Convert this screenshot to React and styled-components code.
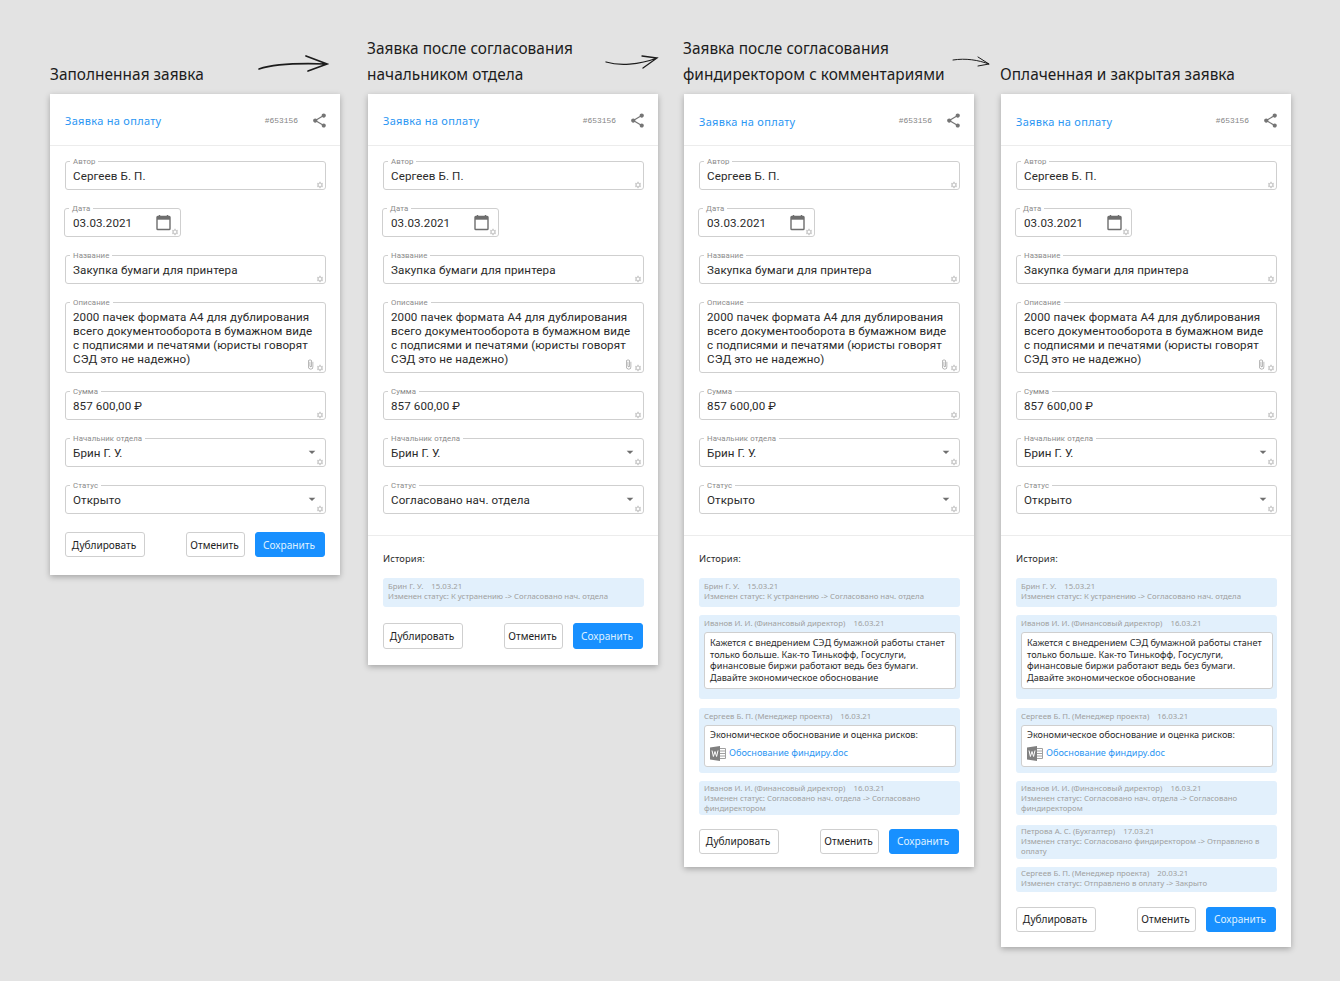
import React from "react";
import styled, { createGlobalStyle } from "styled-components";
import { MdShare, MdSettings, MdArrowDropDown, MdAttachFile } from "react-icons/md";

const Global = createGlobalStyle`
  html, body { margin: 0; padding: 0; background: #e3e3e3; }
  body { font-family: "Noto Sans", sans-serif; color: #1f1f1f; }
`;

const Page = styled.div`
  display: flex;
  align-items: flex-start;
  min-height: 981px;
  padding-left: 50px;
  box-sizing: border-box;
`;
const Column = styled.section`
  flex: 0 0 290px;
  width: 290px;
  margin-left: ${(p) => p.$offset}px;
`;
const HeadingRow = styled.div`
  display: flex;
  align-items: flex-end;
  height: 94px;
  padding-bottom: 6px;
  box-sizing: border-box;
  margin-left: ${(p) => p.$shift}px;
`;
const Heading = styled.h2`
  margin: 0;
  font-family: "Noto Sans", sans-serif;
  font-weight: 400;
  font-size: 15.4px;
  line-height: 26px;
  letter-spacing: 0.03px;
  color: #1c1c1c;
  white-space: nowrap;
`;
const ArrowArt = styled.svg`
  flex: none;
  overflow: visible;
  align-self: flex-start;
  margin-top: ${(p) => p.$top}px;
  margin-left: ${(p) => p.$left}px;
  fill: none;
  stroke: #1c1c1c;
  stroke-linecap: round;
`;
const Card = styled.div`
  width: 290px;
  background: #fff;
  box-shadow: 0 2px 6px rgba(0, 0, 0, 0.28);
`;
const CardHeader = styled.header`
  display: flex;
  align-items: center;
  height: 52px;
  padding: 2px 12px 0 15px;
  box-sizing: border-box;
  border-bottom: 1px solid #ececec;
`;
const CardTitle = styled.a`
  flex: 1;
  font-size: 11px;
  letter-spacing: 0.3px;
  color: #2b96f3;
  margin-top: ${(p) => p.$nudge}px;
`;
const Ticket = styled.span`
  font-family: "Liberation Mono", monospace;
  font-size: 7.9px;
  color: #858585;
  margin-right: 14px;
  margin-top: -1px;
`;
const ShareIcon = styled(MdShare)`
  width: 17px;
  height: 17px;
  color: #757575;
  margin: -1px 0 0 -1px;
`;
const Form = styled.div`
  display: flex;
  flex-direction: column;
  gap: 18px;
  padding: 15px 14px 0 15px;
`;
const Box = styled.div`
  position: relative;
  box-sizing: border-box;
  height: ${(p) => (p.$multi ? 71 : 29)}px;
  width: ${(p) => (p.$narrow ? "117px" : "auto")};
  margin-left: ${(p) => (p.$narrow ? -1 : 0)}px;
  border: 1px solid #cfcfcf;
  border-radius: 3px;
  padding: 7px 8px 0 ${(p) => (p.$narrow ? 8 : 7)}px;
  font-family: Roboto, sans-serif;
  font-size: 11.6px;
  line-height: 14px;
  letter-spacing: 0.1px;
  color: #2a2a2a;
  white-space: pre;
`;
const Legend = styled.label`
  position: absolute;
  left: 4px;
  top: -5px;
  padding: 0 3px;
  background: #fff;
  font-family: Roboto, sans-serif;
  font-size: 7.8px;
  line-height: 9px;
  color: #8b8b8b;
`;
const Gear = styled(MdSettings)`
  position: absolute;
  right: 1px;
  bottom: 0;
  width: 8px;
  height: 8px;
  color: #cdcdcd;
`;
const Caret = styled(MdArrowDropDown)`
  position: absolute;
  right: 5px;
  top: 5px;
  width: 16px;
  height: 16px;
  color: #6f6f6f;
`;
const Clip = styled(MdAttachFile)`
  position: absolute;
  right: 9px;
  bottom: 1px;
  width: 11px;
  height: 13px;
  color: #9a9a9a;
`;
const CalendarArt = styled.svg`
  position: absolute;
  right: 8px;
  top: 5px;
  width: 17px;
  height: 17px;
`;
const History = styled.div`
  margin-top: 21px;
  border-top: 1px solid #ececec;
  padding: 17px 14px 0 15px;
`;
const HistoryTitle = styled.div`
  font-size: 9.4px;
  line-height: 12px;
  letter-spacing: 0.1px;
  color: #2c2c2c;
  margin-bottom: 13px;
`;
const Entry = styled.div`
  background: #e2f0fc;
  border-radius: 3px;
  padding: ${(p) => p.$padTop}px 5px ${(p) => p.$pad}px 5px;
  margin-top: ${(p) => p.$gap}px;
  font-size: 7.8px;
  line-height: 10px;
  color: #a0a0a0;
`;
const Meta = styled.div`
  white-space: pre;
`;
const Comment = styled.div`
  background: #fff;
  border: 1px solid #cfcfcf;
  border-radius: 3px;
  margin: 4px -1px 0 0;
  padding: ${(p) => (p.$withFile ? "3px 3px 5px 5px" : "4px 3px 4px 5px")};
  font-size: 9.13px;
  line-height: 11.7px;
  color: #2a2a2a;
`;
const FileLine = styled.div`
  display: flex;
  align-items: center;
  gap: 3px;
  margin-top: 5px;
  color: #2b96f3;
`;
const WordArt = styled.svg`
  flex: none;
  width: 16px;
  height: 15px;
`;
const Actions = styled.div`
  display: flex;
  align-items: stretch;
  height: ${(p) => p.$h}px;
  margin: ${(p) => p.$top}px 0 0;
  padding: 0 15px ${(p) => p.$bottom}px 15px;
  box-sizing: content-box;
`;
const Button = styled.button`
  box-sizing: border-box;
  width: ${(p) => p.$w}px;
  margin-left: ${(p) => p.$ml}px;
  padding: 0 2px 0 0;
  border: 1px solid ${(p) => (p.$primary ? "#1890ff" : "#cfcfcf")};
  border-radius: 3px;
  background: ${(p) => (p.$primary ? "#1890ff" : "#fff")};
  color: ${(p) => (p.$primary ? "#dff0ff" : "#232323")};
  font-family: "Noto Sans", sans-serif;
  font-size: 10.1px;
`;

const Calendar = () => (
  <CalendarArt viewBox="0 0 17 17">
    <path d="M4.5 1v3M12.5 1v3" stroke="#6e6e6e" strokeWidth="1.4" />
    <rect x="2" y="2.5" width="13" height="13" rx="0.8" fill="none" stroke="#6e6e6e" strokeWidth="1.4" />
    <rect x="2" y="2.5" width="13" height="3.2" fill="#6e6e6e" />
  </CalendarArt>
);

const Word = () => (
  <WordArt viewBox="0 0 16 15">
    <path d="M9 2.5h6.5v10H9" fill="none" stroke="#a0a0a0" strokeWidth="1" />
    <path d="M10 5h5M10 7.5h5M10 10h5" stroke="#a0a0a0" strokeWidth="1" />
    <path d="M0 1.5 10 0v15L0 13.5z" fill="#808080" />
    <path d="M2 4.5l1.4 6 1.6-5 1.6 5 1.4-6" fill="none" stroke="#fff" strokeWidth="1" />
  </WordArt>
);

const Field = ({ label, value, multi, narrow, select, date, clip }) => (
  <Box $multi={multi} $narrow={narrow}>
    <Legend>{label}</Legend>
    {value}
    {select && <Caret />}
    {date && <Calendar />}
    {clip && <Clip />}
    <Gear />
  </Box>
);

const e1 = { meta: "Брин Г. У.    15.03.21", text: "Изменен статус: К устранению -> Согласовано нач. отдела", gap: 0, padTop: 3, pad: 6 };
const c1 = {
  meta: "Иванов И. И. (Финансовый директор)    16.03.21",
  comment: "Кажется с внедрением СЭД бумажной работы станет только больше. Как-то Тинькофф, Госуслуги, финансовые биржи работают ведь без бумаги. Давайте экономическое обоснование",
  gap: 8,
  padTop: 3,
  pad: 10,
};
const c2 = {
  meta: "Сергеев Б. П. (Менеджер проекта)    16.03.21",
  comment: "Экономическое обоснование и оценка рисков:",
  file: "Обоснование финдиру.doc",
  gap: 9,
  padTop: 3,
  pad: 6,
};
const e2 = {
  meta: "Иванов И. И. (Финансовый директор)    16.03.21",
  text: "Изменен статус: Согласовано нач. отдела -> Согласовано финдиректором",
  gap: 8,
  padTop: 2,
  pad: 2,
};
const e3 = {
  meta: "Петрова А. С. (Бухгалтер)    17.03.21",
  text: "Изменен статус: Согласовано финдиректором -> Отправлено в оплату",
  gap: 10,
  padTop: 1,
  pad: 3,
};
const e4 = {
  meta: "Сергеев Б. П. (Менеджер проекта)    20.03.21",
  text: "Изменен статус: Отправлено в оплату -> Закрыто",
  gap: 8,
  padTop: 1,
  pad: 4,
};

const columns = [
  {
    offset: 0, shift: 0, nudge: 0,
    heading: "Заполненная заявка",
    arrow: { w: 70, h: 18, top: 55, left: 54, sw: 1.7, d: "M1 14C16 9 40 8 68 9M48 1 69 9 50 16" },
    status: "Открыто",
    actions: { top: 18, bottom: 18, h: 25 },
  },
  {
    offset: 28, shift: -1, nudge: 0,
    heading: "Заявка после согласования\nначальником отдела",
    arrow: { w: 53, h: 14, top: 55, left: 32, sw: 1.3, d: "M1 7C14 11 34 10 52 3M37 1 52 3 38 13" },
    status: "Согласовано нач. отдела",
    history: [e1],
    actions: { top: 16, bottom: 16, h: 26 },
  },
  {
    offset: 26, shift: -1, nudge: 1,
    heading: "Заявка после согласования\nфиндиректором с комментариями",
    arrow: { w: 38, h: 10, top: 57, left: 7, sw: 1, d: "M1 3C14 1 26 3 37 7M26 0 37 7 26 9" },
    status: "Открыто",
    history: [e1, c1, c2, e2],
    actions: { top: 14, bottom: 13, h: 25 },
  },
  {
    offset: 27, shift: -1, nudge: 1,
    heading: "Оплаченная и закрытая заявка",
    status: "Открыто",
    history: [e1, c1, c2, e2, e3, e4],
    actions: { top: 15, bottom: 15, h: 25 },
  },
];

const HistoryEntry = ({ meta, text, comment, file, gap, padTop, pad }) => (
  <Entry $gap={gap} $padTop={padTop} $pad={pad}>
    <Meta>{meta}</Meta>
    {text && <div>{text}</div>}
    {comment && (
      <Comment $withFile={!!file}>
        {comment}
        {file && (
          <FileLine>
            <Word />
            {file}
          </FileLine>
        )}
      </Comment>
    )}
  </Entry>
);

export default function App() {
  return (
    <Page>
      <Global />
      {columns.map((c, i) => (
        <Column key={i} $offset={c.offset}>
          <HeadingRow $shift={c.shift}>
            <Heading>
              {c.heading.split("\n").map((l) => (
                <div key={l}>{l}</div>
              ))}
            </Heading>
            {c.arrow && (
              <ArrowArt
                $top={c.arrow.top}
                $left={c.arrow.left}
                width={c.arrow.w}
                height={c.arrow.h}
                viewBox={`0 0 ${c.arrow.w} ${c.arrow.h}`}
                strokeWidth={c.arrow.sw}
              >
                <path d={c.arrow.d} />
              </ArrowArt>
            )}
          </HeadingRow>
          <Card>
            <CardHeader>
              <CardTitle $nudge={c.nudge}>Заявка на оплату</CardTitle>
              <Ticket>#653156</Ticket>
              <ShareIcon />
            </CardHeader>
            <Form>
              <Field label="Автор" value="Сергеев Б. П." />
              <Field label="Дата" value="03.03.2021" narrow date />
              <Field label="Название" value="Закупка бумаги для принтера" />
              <Field
                label="Описание"
                multi
                clip
                value={"2000 пачек формата А4 для дублирования\nвсего документооборота в бумажном виде\nс подписями и печатями (юристы говорят\nСЭД это не надежно)"}
              />
              <Field label="Сумма" value="857 600,00 ₽" />
              <Field label="Начальник отдела" value="Брин Г. У." select />
              <Field label="Статус" value={c.status} select />
            </Form>
            {c.history && (
              <History>
                <HistoryTitle>История:</HistoryTitle>
                {c.history.map((h, k) => (
                  <HistoryEntry key={k} {...h} />
                ))}
              </History>
            )}
            <Actions $top={c.actions.top} $bottom={c.actions.bottom} $h={c.actions.h}>
              <Button $w={80} $ml={0}>Дублировать</Button>
              <Button $w={59} $ml={41}>Отменить</Button>
              <Button $w={70} $ml={10} $primary>Сохранить</Button>
            </Actions>
          </Card>
        </Column>
      ))}
    </Page>
  );
}
